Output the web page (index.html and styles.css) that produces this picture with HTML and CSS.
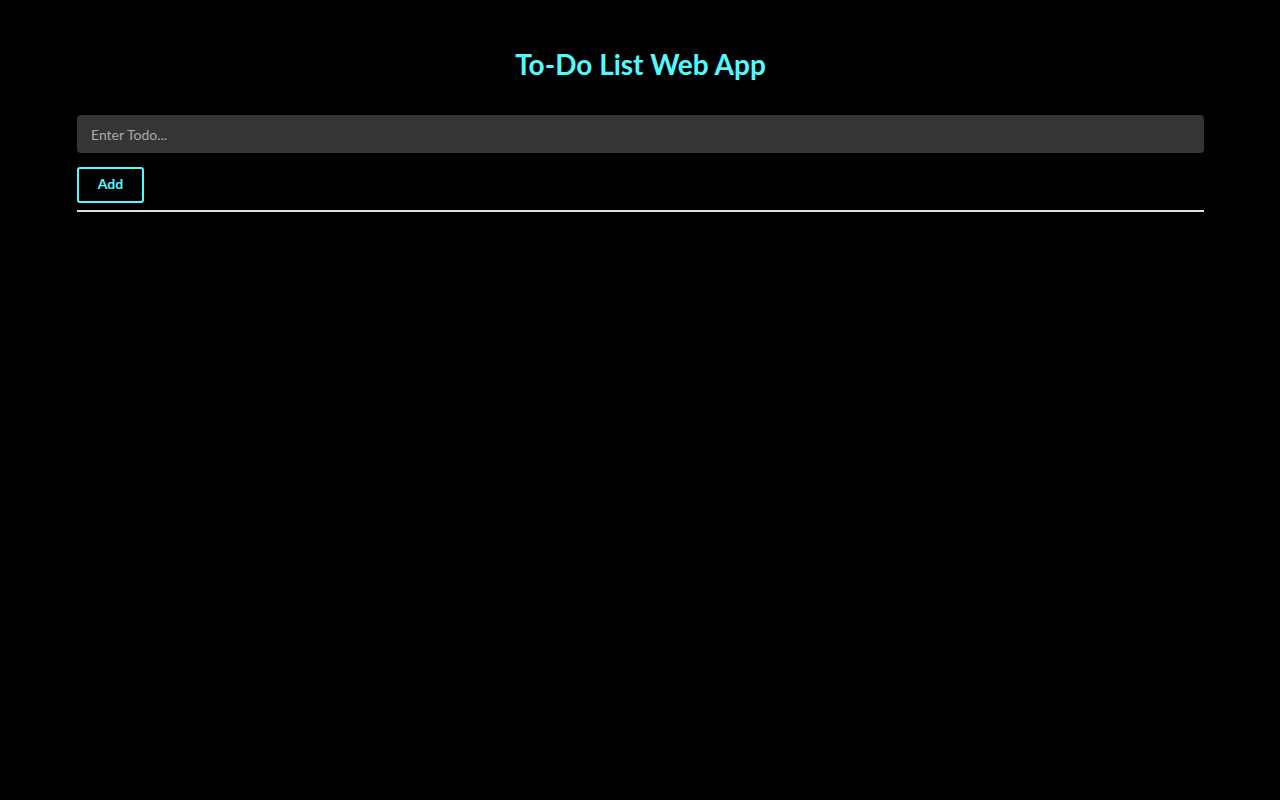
FILE: index.html
```html
<!DOCTYPE html>
<html lang="en">
<head>
<meta charset="UTF-8">
<title>To-Do List Web App</title>
<link rel="stylesheet" href="styles.css">
</head>
<body>
<div class="app">
  <h1 class="title">To-Do List Web App</h1>
  <form class="todo-form" onsubmit="return false;">
    <input class="todo-input" type="text" placeholder="Enter Todo...">
    <button class="add-btn" type="submit">Add</button>
  </form>
  <ul class="todo-list"></ul>
</div>
</body>
</html>
```
FILE: styles.css
```css
* { box-sizing: border-box; }
html, body { margin: 0; padding: 0; background: #000; }
body { font-family: Lato, "Open Sans", sans-serif; color: #fff; }
.app { margin: 0 76px 0 77px; padding-top: 46px; }
.title {
  margin: 0;
  text-align: center;
  color: #4ffcff;
  font-size: 28px;
  font-weight: 700;
  line-height: 36px;
}
.todo-form {
  margin-top: 33px;
  display: flex;
  flex-direction: column;
  align-items: flex-start;
  gap: 14px;
  padding-bottom: 7px;
  border-bottom: 2px solid #e0e0e0;
}
.todo-input {
  width: 100%;
  height: 38px;
  background: #353535;
  border: none;
  border-radius: 4px;
  padding: 0 14px;
  color: #fff;
  font-family: Lato, sans-serif;
  font-size: 14px;
  outline: none;
}
.todo-input::placeholder { color: #a9a9a9; }
.add-btn {
  width: 67px;
  height: 36px;
  padding: 0 0 3px;
  background: #000;
  color: #4ffcff;
  border: 2px solid #4ffcff;
  border-radius: 3px;
  font-family: Lato, sans-serif;
  font-weight: 700;
  font-size: 14px;
  line-height: 1;
  cursor: pointer;
}
.todo-list { list-style: none; margin: 0; padding: 0; }
```
